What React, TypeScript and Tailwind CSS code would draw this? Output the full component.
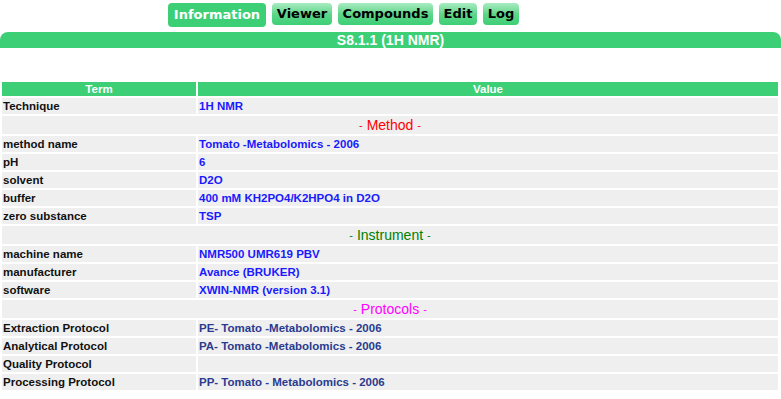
import React from "react";

type Row =
  | { kind: "row"; term: string; value: string; tone?: "blue" | "navy" }
  | { kind: "section"; title: string; color: string };

const rows: Row[] = [
  { kind: "row", term: "Technique", value: "1H NMR" },
  { kind: "section", title: "Method", color: "text-[#ff0000]" },
  { kind: "row", term: "method name", value: "Tomato -Metabolomics - 2006" },
  { kind: "row", term: "pH", value: "6" },
  { kind: "row", term: "solvent", value: "D2O" },
  { kind: "row", term: "buffer", value: "400 mM KH2PO4/K2HPO4 in D2O" },
  { kind: "row", term: "zero substance", value: "TSP" },
  { kind: "section", title: "Instrument", color: "text-[#008000]" },
  { kind: "row", term: "machine name", value: "NMR500 UMR619 PBV" },
  { kind: "row", term: "manufacturer", value: "Avance (BRUKER)" },
  { kind: "row", term: "software", value: "XWIN-NMR (version 3.1)" },
  { kind: "section", title: "Protocols", color: "text-[#ff00ff]" },
  { kind: "row", term: "Extraction Protocol", value: "PE- Tomato -Metabolomics - 2006", tone: "navy" },
  { kind: "row", term: "Analytical Protocol", value: "PA- Tomato -Metabolomics - 2006", tone: "navy" },
  { kind: "row", term: "Quality Protocol", value: "", tone: "navy" },
  { kind: "row", term: "Processing Protocol", value: "PP- Tomato - Metabolomics - 2006", tone: "navy" },
];

const tabs = [
  { label: "Information", w: "w-[98px]", active: true },
  { label: "Viewer", w: "w-[60px]" },
  { label: "Compounds", w: "w-[95px]" },
  { label: "Edit", w: "w-[38px]" },
  { label: "Log", w: "w-[36px]" },
];

export default function App() {
  return (
    <div className="w-[781px] h-[399px] bg-white overflow-hidden font-['Liberation_Sans',Arial,sans-serif]">
      <div className="flex items-start gap-[6px] pl-[168px] pt-[3px] h-[32px]">
        {tabs.map((t) =>
          t.active ? (
            <div
              key={t.label}
              className={`${t.w} h-[24px] rounded-[4px] bg-[#3ccf76] text-white flex items-center justify-center font-['DejaVu_Sans',Verdana,sans-serif] font-bold text-[13px]`}
            >
              {t.label}
            </div>
          ) : (
            <div
              key={t.label}
              className={`${t.w} h-[22px] rounded-[4px] bg-gradient-to-b from-[#a8ebc1] via-[#5ed68b] to-[#3ccf76] text-black flex items-center justify-center font-['DejaVu_Sans',Verdana,sans-serif] font-bold text-[13px]`}
            >
              {t.label}
            </div>
          )
        )}
      </div>
      <div className="h-[16px] rounded-t-[8px] bg-[#3ccf76] text-white font-bold text-[14px] leading-[16px] text-center">
        S8.1.1 (1H NMR)
      </div>
      <div className="h-[32px]" />
      <table className="w-[780px] border-separate border-spacing-[2px] text-[11.5px] font-bold">
        <thead>
          <tr className="h-[14px]">
            <th className="w-[194px] bg-[#3ccf76] text-white text-center p-0 leading-[14px] font-bold">Term</th>
            <th className="bg-[#3ccf76] text-white text-center p-0 leading-[14px] font-bold">Value</th>
          </tr>
        </thead>
        <tbody>
          {rows.map((r, i) =>
            r.kind === "section" ? (
              <tr key={i} className="h-[18px]">
                <td colSpan={2} className={`bg-[#efefef] p-0 h-[18px] font-normal ${r.color}`}>
                  <div className="h-[18px] flex items-center justify-center gap-[4px] leading-none">
                    <span className="text-[11px]">-</span>
                    <span className="text-[14px]">{r.title}</span>
                    <span className="text-[11px]">-</span>
                  </div>
                </td>
              </tr>
            ) : (
              <tr key={i} className="h-[16px]">
                <td className="bg-[#efefef] text-[#111] px-[1px] py-0 h-[16px] leading-[16px]">{r.term}</td>
                <td
                  className={`bg-[#efefef] px-[1px] py-0 h-[16px] leading-[16px] ${
                    r.tone === "navy" ? "text-[#2a3b8f]" : "text-[#1a1aff]"
                  }`}
                >
                  {r.value}
                </td>
              </tr>
            )
          )}
        </tbody>
      </table>
    </div>
  );
}
